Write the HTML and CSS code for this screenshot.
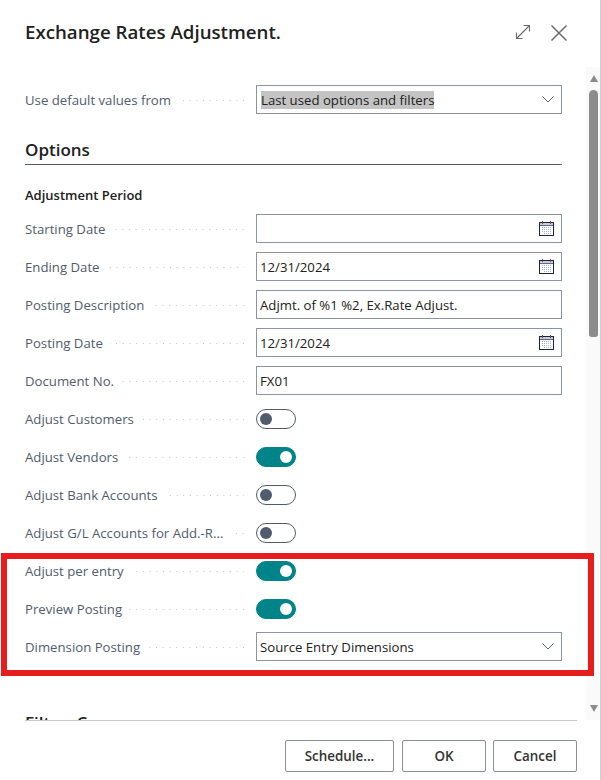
FILE: index.html
```html
<!DOCTYPE html>
<html lang="en">
<head>
  <meta charset="UTF-8">
  <meta name="viewport" content="width=device-width, initial-scale=1.0">
  <title>Exchange Rates Adjustment.</title>
  <link rel="stylesheet" href="styles.css">
</head>
<body>
  <div class="dialog">
    <header class="dialog-header">
      <h1 class="dialog-title">Exchange Rates Adjustment.</h1>
      <div class="header-actions">
        <svg class="icon-expand" width="16" height="16" viewBox="0 0 16 16" fill="none" stroke="#6b6b6b" stroke-width="1.1">
          <path d="M1.5 14.5 14.5 1.5M8.5 1.5h6v6M1.5 8.5v6h6"/>
        </svg>
        <svg class="icon-close" width="18" height="18" viewBox="0 0 18 18" fill="none" stroke="#6b6b6b" stroke-width="1.5">
          <path d="M1.5 1.5 16.5 16.5M16.5 1.5 1.5 16.5"/>
        </svg>
      </div>
    </header>

    <div class="dialog-body">
      <div class="form">
        <div class="row">
          <div class="label"><span class="label-text">Use default values from</span><span class="leader"></span></div>
          <div class="field">
            <span class="selected">Last used options and filters</span>
            <svg class="chevron" width="12" height="7" viewBox="0 0 12 7" fill="none" stroke="#4f6482" stroke-width="1"><path d="M.5.5 6 6l5.5-5.5"/></svg>
          </div>
        </div>

        <h2 class="section-title">Options</h2>
        <h3 class="group-title">Adjustment Period</h3>

        <div class="row">
          <div class="label"><span class="label-text">Starting Date</span><span class="leader"></span></div>
          <div class="field">
            <svg class="calendar" width="15" height="15" viewBox="0 0 15 15"><use href="#cal"/></svg>
          </div>
        </div>
        <div class="row">
          <div class="label"><span class="label-text">Ending Date</span><span class="leader"></span></div>
          <div class="field">12/31/2024
            <svg class="calendar" width="15" height="15" viewBox="0 0 15 15"><use href="#cal"/></svg>
          </div>
        </div>
        <div class="row">
          <div class="label"><span class="label-text">Posting Description</span><span class="leader"></span></div>
          <div class="field">Adjmt. of %1 %2, Ex.Rate Adjust.</div>
        </div>
        <div class="row">
          <div class="label"><span class="label-text">Posting Date</span><span class="leader"></span></div>
          <div class="field">12/31/2024
            <svg class="calendar" width="15" height="15" viewBox="0 0 15 15"><use href="#cal"/></svg>
          </div>
        </div>
        <div class="row">
          <div class="label"><span class="label-text">Document No.</span><span class="leader"></span></div>
          <div class="field">FX01</div>
        </div>
        <div class="row">
          <div class="label"><span class="label-text">Adjust Customers</span><span class="leader"></span></div>
          <span class="toggle"></span>
        </div>
        <div class="row">
          <div class="label"><span class="label-text">Adjust Vendors</span><span class="leader"></span></div>
          <span class="toggle on"></span>
        </div>
        <div class="row">
          <div class="label"><span class="label-text">Adjust Bank Accounts</span><span class="leader"></span></div>
          <span class="toggle"></span>
        </div>
        <div class="row">
          <div class="label"><span class="label-text truncated">Adjust G/L Accounts for Add.-R...</span><span class="leader"></span></div>
          <span class="toggle"></span>
        </div>

        <div class="marked">
          <div class="row">
            <div class="label"><span class="label-text">Adjust per entry</span><span class="leader"></span></div>
            <span class="toggle on"></span>
          </div>
          <div class="row">
            <div class="label"><span class="label-text">Preview Posting</span><span class="leader"></span></div>
            <span class="toggle on"></span>
          </div>
          <div class="row">
            <div class="label"><span class="label-text">Dimension Posting</span><span class="leader"></span></div>
            <div class="field">Source Entry Dimensions
              <svg class="chevron" width="12" height="7" viewBox="0 0 12 7" fill="none" stroke="#4f6482" stroke-width="1"><path d="M.5.5 6 6l5.5-5.5"/></svg>
            </div>
          </div>
        </div>

        <h2 class="section-title filter-title">Filter: Currency</h2>
      </div>

      <div class="scrollbar">
        <span class="arrow-up"></span>
        <span class="thumb"></span>
        <span class="arrow-down"></span>
      </div>
    </div>

    <footer class="dialog-footer">
      <button class="btn btn-schedule">Schedule...</button>
      <button class="btn btn-ok">OK</button>
      <button class="btn btn-cancel">Cancel</button>
    </footer>
  </div>

  <svg width="0" height="0" class="defs">
    <defs>
      <g id="cal">
        <rect x=".5" y="1.5" width="14" height="13" fill="#fff" stroke="#1b2340"/>
        <path d="M1 4.5h13" stroke="#5d6c86"/>
        <rect x="1" y="2" width="13" height="2" fill="#c3ccd8"/>
        <path d="M3.5 0v3M11.5 0v3" stroke="#8a3a4a"/>
        <path d="M3 6.5h9M3 8.5h9M3 10.5h9M5 12.5h7" stroke="#9fb3cc" stroke-dasharray="1 1"/>
      </g>
    </defs>
  </svg>
</body>
</html>
```

FILE: styles.css
```css
*,
*::after {
  box-sizing: border-box;
}

body {
  margin: 0;
  background-color: white;
  font-family: "Open Sans", "Noto Sans", sans-serif;
  font-size: 13.2px;
  color: #212121;
}

.defs {
  position: absolute;
}

.dialog {
  display: flex;
  flex-direction: column;
  width: 601px;
  height: 780px;
  border-right: 1px solid #cfcfcf;
  overflow: hidden;
}

.dialog-header {
  display: flex;
  justify-content: space-between;
  align-items: flex-start;
  height: 67px;
  padding: 19px 32px 0 25px;
  flex-shrink: 0;
}

.dialog-title {
  margin: 0;
  font-size: 18.7px;
  line-height: 26px;
  font-weight: 600;
  color: #212121;
}

.header-actions {
  display: flex;
  gap: 19px;
  padding-top: 5px;
}

.dialog-body {
  display: flex;
  height: 653px;
  flex-shrink: 0;
  overflow: hidden;
}

.form {
  width: 586px;
  flex-shrink: 0;
  padding: 18px 24px 0 25px;
}

.row {
  display: flex;
  align-items: center;
  height: 30px;
  margin-bottom: 8px;
}

.label {
  display: flex;
  align-items: center;
  width: 219px;
  margin-right: 12px;
  color: #505c6d;
}

.label-text {
  white-space: nowrap;
}

.label-text.truncated {
  padding-right: 6px;
}

.leader {
  flex: 1;
  height: 1px;
  margin-left: 7px;
  background-image: linear-gradient(to left, #bfc4cb 1px, transparent 1px);
  background-size: 6.7px 1px;
  background-position: right center;
}

.field {
  display: flex;
  align-items: center;
  justify-content: space-between;
  align-self: flex-start;
  width: 306px;
  height: 29px;
  padding: 0 6px 0 3px;
  border: 1px solid #8a94a6;
  background-color: white;
}

.selected {
  margin-left: 1px;
  background-color: #c4c4c4;
  line-height: 18px;
}

.chevron {
  margin-left: auto;
  margin-right: 1px;
}

.calendar {
  margin-left: auto;
  margin-right: 1px;
}

.section-title {
  height: 35px;
  margin: 15px 0 0;
  padding-top: 5px;
  border-bottom: 1px solid #505c6d;
  font-size: 17px;
  line-height: 30px;
  font-weight: 600;
  color: #212121;
}

.group-title {
  height: 49px;
  margin: 0;
  padding-top: 20px;
  font-size: 13px;
  line-height: 20px;
  font-weight: 600;
  color: #212121;
}

.filter-title {
  margin-top: 41px;
  border-bottom: none;
}

.toggle {
  position: relative;
  width: 40px;
  height: 20px;
  border: 1px solid #505c6d;
  border-radius: 10px;
  background-color: white;
}

.toggle::after {
  content: "";
  position: absolute;
  top: 3px;
  left: 3px;
  width: 12px;
  height: 12px;
  border-radius: 50%;
  background-color: #505c6d;
}

.toggle.on {
  border-color: #008489;
  background-color: #008489;
}

.toggle.on::after {
  left: auto;
  right: 3px;
  background-color: white;
}

/* red annotation drawn on the screenshot */
.marked {
  position: relative;
}

.marked::after {
  content: "";
  position: absolute;
  top: -3px;
  left: -24px;
  width: 593px;
  height: 123px;
  border: 6px solid #e71c1c;
  pointer-events: none;
}

.scrollbar {
  display: flex;
  flex-direction: column;
  align-items: center;
  width: 14px;
  padding: 8px 2px 8px 3px;
  background-color: #fafafa;
}

.arrow-up,
.arrow-down {
  width: 0;
  height: 0;
  border-left: 4.5px solid transparent;
  border-right: 4.5px solid transparent;
}

.arrow-up {
  border-bottom: 7px solid #8c8c8c;
}

.arrow-down {
  margin-top: auto;
  border-top: 7px solid #8c8c8c;
}

.thumb {
  width: 9px;
  height: 247px;
  margin-top: 8px;
  border-radius: 5px 5px 3px 3px;
  background-color: #8c8c8c;
}

.dialog-footer {
  display: flex;
  justify-content: flex-end;
  gap: 7px;
  margin: 0 23px 0 25px;
  padding-top: 19px;
  border-top: 1px solid #c8c8c8;
}

.btn {
  height: 32px;
  padding: 0;
  border: 1px solid #8a8f98;
  border-radius: 2px;
  background-color: white;
  font-family: inherit;
  font-size: 13.4px;
  font-weight: 600;
  color: #333;
}

.btn-schedule {
  width: 109px;
  margin-right: 1px;
}

.btn-ok {
  width: 84px;
}

.btn-cancel {
  width: 84px;
}
```
